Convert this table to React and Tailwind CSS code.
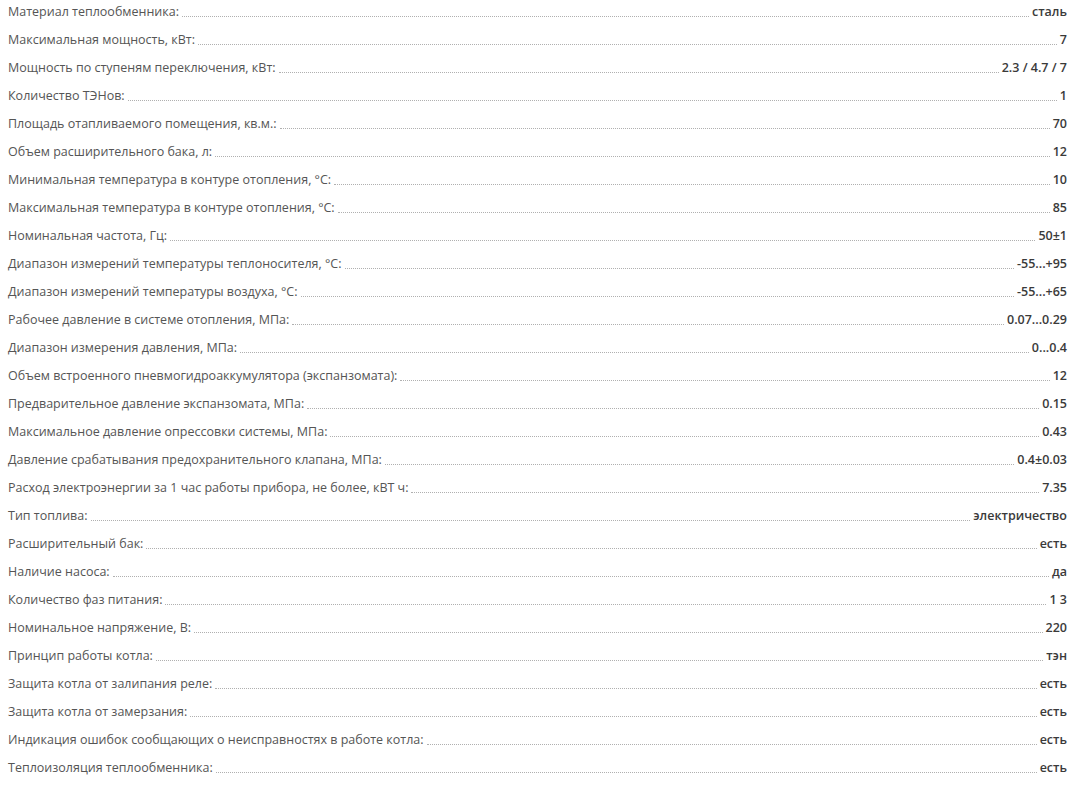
import React from "react";

const rows = [
  ["Материал теплообменника:", "сталь"],
  ["Максимальная мощность, кВт:", "7"],
  ["Мощность по ступеням переключения, кВт:", "2.3 / 4.7 / 7"],
  ["Количество ТЭНов:", "1"],
  ["Площадь отапливаемого помещения, кв.м.:", "70"],
  ["Объем расширительного бака, л:", "12"],
  ["Минимальная температура в контуре отопления, °С:", "10"],
  ["Максимальная температура в контуре отопления, °С:", "85"],
  ["Номинальная частота, Гц:", "50±1"],
  ["Диапазон измерений температуры теплоносителя, °С:", "-55...+95"],
  ["Диапазон измерений температуры воздуха, °С:", "-55...+65"],
  ["Рабочее давление в системе отопления, МПа:", "0.07...0.29"],
  ["Диапазон измерения давления, МПа:", "0...0.4"],
  ["Объем встроенного пневмогидроаккумулятора (экспанзомата):", "12"],
  ["Предварительное давление экспанзомата, МПа:", "0.15"],
  ["Максимальное давление опрессовки системы, МПа:", "0.43"],
  ["Давление срабатывания предохранительного клапана, МПа:", "0.4±0.03"],
  ["Расход электроэнергии за 1 час работы прибора, не более, кВТ ч:", "7.35"],
  ["Тип топлива:", "электричество"],
  ["Расширительный бак:", "есть"],
  ["Наличие насоса:", "да"],
  ["Количество фаз питания:", "1 3"],
  ["Номинальное напряжение, В:", "220"],
  ["Принцип работы котла:", "тэн"],
  ["Защита котла от залипания реле:", "есть"],
  ["Защита котла от замерзания:", "есть"],
  ["Индикация ошибок сообщающих о неисправностях в работе котла:", "есть"],
  ["Теплоизоляция теплообменника:", "есть"],
];

export default function App() {
  return (
    <div
      className="w-[1077px] h-[786px] bg-white pl-[8px] pr-[10px] overflow-hidden"
      style={{ fontFamily: '"Open Sans", "Noto Sans", sans-serif' }}
    >
      {rows.map(([label, value], i) => (
        <div key={i} className="flex items-end h-[28px] pb-[8px] text-[12.5px] leading-[16px]">
          <span className="text-[#555555] whitespace-nowrap">{label}</span>
          <div className="flex-1 mx-[3px] mb-[3px] border-b border-dotted border-[#b0b0b0]" />
          <span className="text-[#3a3a3a] font-semibold whitespace-nowrap">{value}</span>
        </div>
      ))}
    </div>
  );
}
